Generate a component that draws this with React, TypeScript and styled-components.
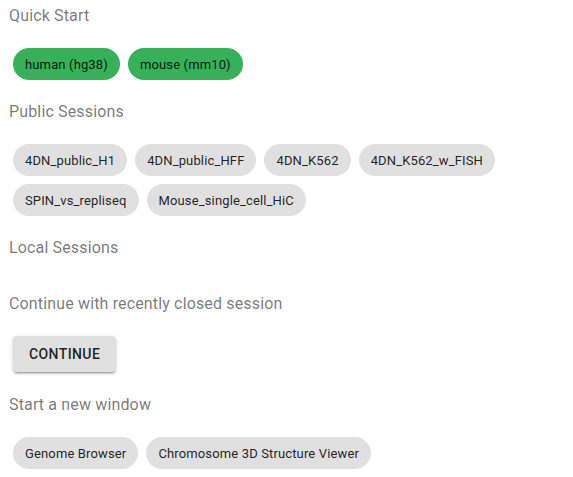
import styled, { createGlobalStyle } from 'styled-components';

const GlobalStyle = createGlobalStyle`
    body {
        margin: 0;
        background: #ffffff;
        font-family: Roboto, "Helvetica Neue", Arial, sans-serif;
    }
`;

const Page = styled.div`
    display: flex;
    flex-direction: column;
    padding: 4px 9px 0 9px;
`;

const Section = styled.section<{ $after?: number }>`
    display: flex;
    flex-direction: column;
    padding-bottom: ${(p) => p.$after ?? 20}px;
`;

const Heading = styled.div<{ $empty?: boolean }>`
    font-size: 16px;
    line-height: 24px;
    letter-spacing: 0.00938em;
    color: rgba(0, 0, 0, 0.54);
    margin-bottom: ${(p) => (p.$empty ? 0 : 20)}px;
`;

const ChipRow = styled.div`
    display: flex;
    flex-wrap: wrap;
    gap: 8px;
    padding: 0 4px;
`;

const Chip = styled.button<{ $primary?: boolean }>`
    display: inline-flex;
    align-items: center;
    height: 32px;
    padding: 0 12px;
    border: none;
    border-radius: 16px;
    background: ${(p) => (p.$primary ? '#37b05a' : '#e0e0e0')};
    color: rgba(0, 0, 0, 0.87);
    font-family: Roboto, Arial, sans-serif;
    font-size: 13px;
    letter-spacing: 0.01071em;
    cursor: pointer;
`;

const ButtonRow = styled.div`
    display: flex;
    padding: 0 4px;
`;

const RaisedButton = styled.button`
    height: 36px;
    padding: 0 16px;
    border: none;
    border-radius: 4px;
    background: #e0e0e0;
    color: rgba(0, 0, 0, 0.87);
    font-family: Roboto, Arial, sans-serif;
    font-size: 14px;
    font-weight: 500;
    letter-spacing: 0.02857em;
    text-transform: uppercase;
    box-shadow: 0 3px 1px -2px rgba(0, 0, 0, 0.2), 0 2px 2px 0 rgba(0, 0, 0, 0.14),
        0 1px 5px 0 rgba(0, 0, 0, 0.12);
    cursor: pointer;
`;

const quickStart = ['human (hg38)', 'mouse (mm10)'];
const publicSessions = [
    '4DN_public_H1',
    '4DN_public_HFF',
    '4DN_K562',
    '4DN_K562_w_FISH',
    'SPIN_vs_repliseq',
    'Mouse_single_cell_HiC',
];
const newWindows = ['Genome Browser', 'Chromosome 3D Structure Viewer'];

export default function App() {
    return (
        <>
            <GlobalStyle />
            <Page>
                <Section>
                    <Heading>Quick Start</Heading>
                    <ChipRow>
                        {quickStart.map((name) => (
                            <Chip key={name} $primary>{name}</Chip>
                        ))}
                    </ChipRow>
                </Section>
                <Section>
                    <Heading>Public Sessions</Heading>
                    <ChipRow>
                        {publicSessions.map((name) => (
                            <Chip key={name}>{name}</Chip>
                        ))}
                    </ChipRow>
                </Section>
                <Section $after={32}>
                    <Heading $empty>Local Sessions</Heading>
                </Section>
                <Section $after={21}>
                    <Heading>Continue with recently closed session</Heading>
                    <ButtonRow>
                        <RaisedButton>Continue</RaisedButton>
                    </ButtonRow>
                </Section>
                <Section>
                    <Heading>Start a new window</Heading>
                    <ChipRow>
                        {newWindows.map((name) => (
                            <Chip key={name}>{name}</Chip>
                        ))}
                    </ChipRow>
                </Section>
            </Page>
        </>
    );
}
